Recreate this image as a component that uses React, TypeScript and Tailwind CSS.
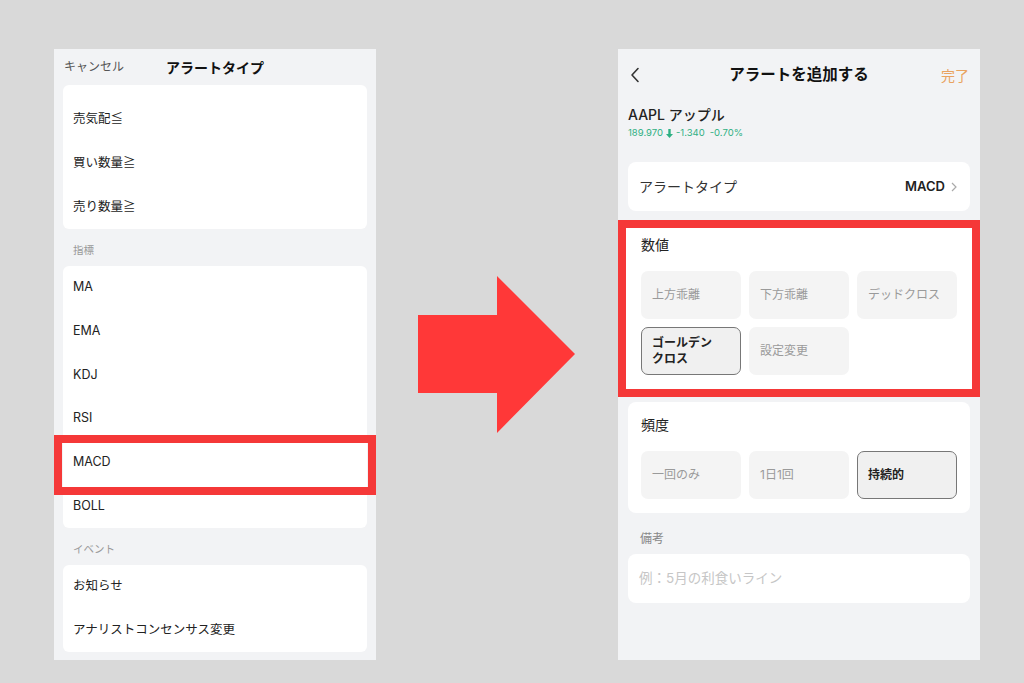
const font = { fontFamily: 'Inter, "Noto Sans CJK JP", sans-serif' }

function Row({ label, boxed }: { label: string; boxed?: boolean }) {
  return (
    <div className="relative flex flex-1 items-center pl-[10px] text-[12.5px] text-[#222]">
      {label}
      {boxed && (
        <div className="absolute -top-[6px] -bottom-[11px] -left-[9px] -right-[9px] border-[8px] border-[#f53838]" />
      )}
    </div>
  )
}

function SectionLabel({ children }: { children: string }) {
  return (
    <div className="pl-[19px] pt-[15px] pb-[8px] text-[10.5px] leading-[14px] text-[#999]">
      {children}
    </div>
  )
}

function AlertTypeList() {
  return (
    <div className="flex h-[611px] w-[322px] flex-col bg-[#f2f3f5]">
      <div className="grid h-[36px] grid-cols-[1fr_auto_1fr] items-center">
        <span className="pl-[10px] text-[12px] text-[#555]">キャンセル</span>
        <span className="text-[14px] font-bold text-[#111]">アラートタイプ</span>
        <span />
      </div>

      <div className="mx-[9px] flex h-[144px] flex-col rounded-md bg-white pt-[12px]">
        <Row label="売気配≦" />
        <Row label="買い数量≧" />
        <Row label="売り数量≧" />
      </div>

      <SectionLabel>指標</SectionLabel>
      <div className="mx-[9px] flex h-[262px] flex-col rounded-md bg-white">
        {['MA', 'EMA', 'KDJ', 'RSI', 'MACD', 'BOLL'].map((l) => (
          <Row key={l} label={l} boxed={l === 'MACD'} />
        ))}
      </div>

      <SectionLabel>イベント</SectionLabel>
      <div className="mx-[9px] flex h-[87px] flex-col rounded-md bg-white">
        <Row label="お知らせ" />
        <Row label="アナリストコンセンサス変更" />
      </div>
    </div>
  )
}

function Option({ label, selected }: { label: string; selected?: boolean }) {
  return (
    <div
      className={
        selected
          ? 'flex h-[48px] items-center whitespace-pre-line rounded-[7px] border border-[#777] bg-[#f0f0f0] px-[10px] text-[12px] leading-[16px] font-bold text-[#222]'
          : 'flex h-[48px] items-center rounded-[7px] bg-[#f4f4f4] px-[11px] text-[12px] leading-[16px] text-[#9a9a9a]'
      }
    >
      {label}
    </div>
  )
}

function AddAlert() {
  return (
    <div className="flex h-[611px] w-[362px] flex-col bg-[#f2f3f5]">
      <div className="grid h-[52px] grid-cols-[1fr_auto_1fr] items-center">
        <div className="pl-[12px]">
          <svg width="10" height="16" viewBox="0 0 10 16" fill="none">
            <path d="M8 1.5 L2 8 L8 14.5" stroke="#333" strokeWidth="1.6" strokeLinecap="round" strokeLinejoin="round" />
          </svg>
        </div>
        <span className="text-[15.5px] font-bold text-[#111]">アラートを追加する</span>
        <span className="pr-[11px] text-right text-[14px] text-[#e9a35f]">完了</span>
      </div>

      <div className="px-[10px]">
        <div className="mt-[4px] text-[14px] leading-[20px] font-medium text-[#222]">AAPL アップル</div>
        <div className="mt-[2px] flex items-center gap-[3px] text-[9.5px] leading-[12px] text-[#2fb083]">
          <span>189.970</span>
          <svg width="7" height="9" viewBox="0 0 7 9">
            <path d="M2.3 0 H4.7 V5 H7 L3.5 9 L0 5 H2.3 Z" fill="#2fb083" />
          </svg>
          <span>-1.340</span>
          <span className="ml-[2px]">-0.70%</span>
        </div>
      </div>

      <div className="mx-[10px] mt-[23px] flex h-[49px] items-center justify-between rounded-lg bg-white pl-[11px] pr-[13px]">
        <span className="text-[14px] text-[#333]">アラートタイプ</span>
        <div className="flex items-center gap-[6px]">
          <span className="text-[13px] font-semibold text-[#222]">MACD</span>
          <svg width="6" height="10" viewBox="0 0 6 10" fill="none">
            <path d="M1 1 L5 5 L1 9" stroke="#aaa" strokeWidth="1.2" />
          </svg>
        </div>
      </div>

      <div className="mt-[9px] border-[8px] border-[#f53838] bg-white pl-[15px] pt-[7px] pb-[14px]">
        <div className="text-[14px] leading-[20px] text-[#222]">数値</div>
        <div className="mt-[16px] grid grid-cols-[100px_100px_100px] gap-[8px]">
          <Option label="上方乖離" />
          <Option label="下方乖離" />
          <Option label="デッドクロス" />
          <Option label={'ゴールデン\nクロス'} selected />
          <Option label="設定変更" />
        </div>
      </div>

      <div className="mx-[10px] mt-[5px] rounded-lg bg-white pl-[13px] pt-[13px] pb-[14px]">
        <div className="text-[14px] leading-[20px] text-[#222]">頻度</div>
        <div className="mt-[16px] grid grid-cols-[100px_100px_100px] gap-[8px]">
          <Option label="一回のみ" />
          <Option label="1日1回" />
          <Option label="持続的" selected />
        </div>
      </div>

      <div className="mt-[18px] pl-[22px] text-[12px] leading-[16px] text-[#888]">備考</div>
      <div className="mx-[10px] mt-[7px] flex h-[49px] items-center rounded-lg bg-white pl-[11px] text-[13.5px] text-[#c6c6c6]">
        例：5月の利食いライン
      </div>
    </div>
  )
}

export default function App() {
  return (
    <div className="flex h-[683px] w-[1024px] items-center bg-[#d9d9d9] pl-[54px] pb-[23px] pt-[49px]" style={font}>
      <AlertTypeList />
      <svg className="ml-[42px]" width="157" height="157" viewBox="0 0 157 157">
        <path d="M0 39 H79 V0 L157 78 L79 157 V117 H0 Z" fill="#ff3838" />
      </svg>
      <div className="ml-[43px]">
        <AddAlert />
      </div>
    </div>
  )
}
